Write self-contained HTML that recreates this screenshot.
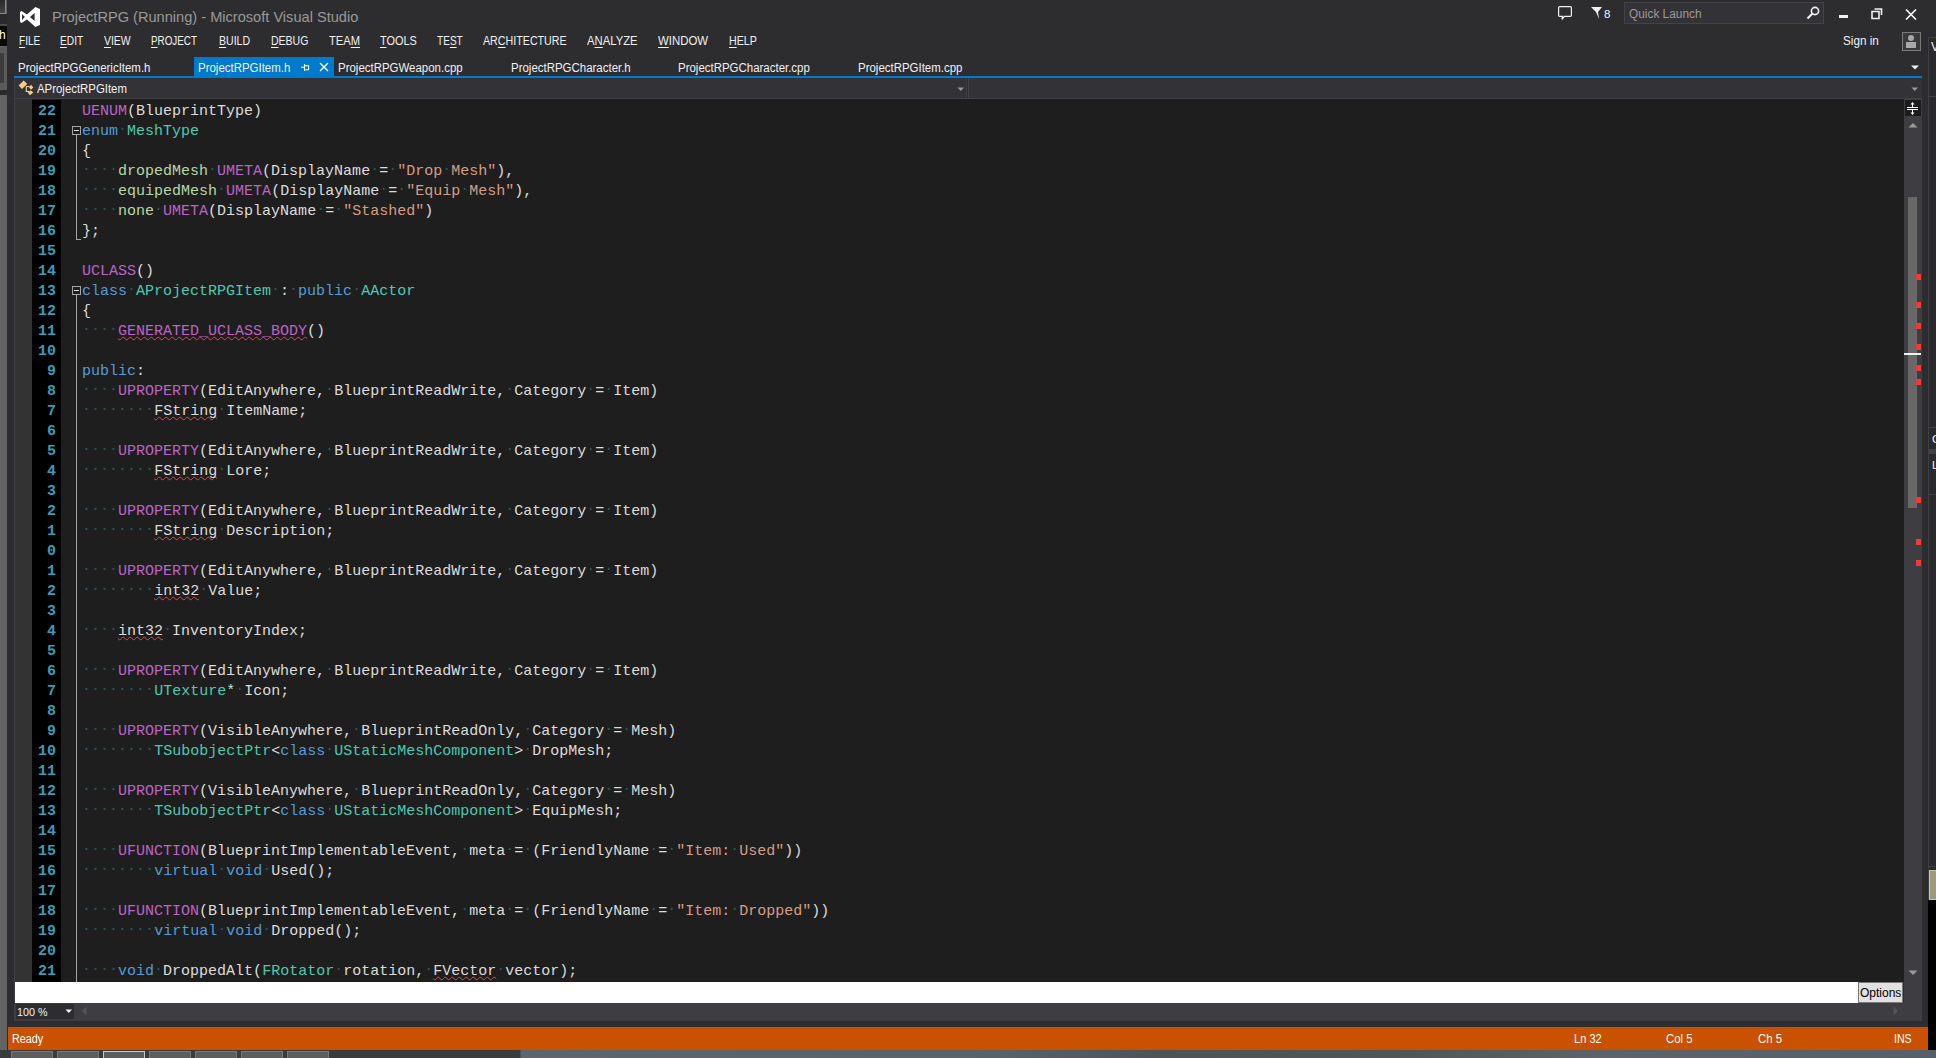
<!DOCTYPE html>
<html><head><meta charset="utf-8">
<style>
*{margin:0;padding:0;box-sizing:border-box}
html,body{width:1936px;height:1058px;overflow:hidden;background:#2d2d30;font-family:"Liberation Sans",sans-serif}
.a{position:absolute}
.ui{font-size:11.5px;color:#f1f1f1;white-space:nowrap;line-height:14px}
/* left strip */
#lstrip{left:0;top:0;width:7px;height:1050px;background:#636363}
/* title */
#title{left:52px;top:8px;font-size:14.6px;color:#999999;line-height:18px;white-space:nowrap}
.menu{top:34px;font-size:12px;transform-origin:0 0}
.menu u{text-decoration:underline;text-underline-offset:2px}
/* tabs */
#tabline{left:14px;top:76px;width:1908px;height:2px;background:#007acc}
#acttab{left:194px;top:57px;width:140px;height:19px;background:#007acc}
.tab{top:61px;font-size:12px;transform:scaleX(0.955);transform-origin:0 0}
/* nav bar */
#nav{left:14px;top:78px;width:1908px;height:21px;background:#333337;border-bottom:1px solid #434346;border-left:1px solid #3f3f46}
#navsep{left:966px;top:78px;width:3px;height:20px;background:#2d2d30;border-left:1px solid #3f3f46;border-right:1px solid #434346}
/* editor */
#editor{left:15px;top:99px;width:1889px;height:883px;background:#1e1e1e;overflow:hidden}
#lmargin{left:15px;top:99px;width:17px;height:883px;background:#333333}
#gutter{left:32px;top:100px;width:29px;height:882px;background:#000}
#nums{left:32px;top:102px;width:24px;font-family:"Liberation Mono",monospace;font-weight:bold;font-size:15px;line-height:20px;color:#3a9cb8;text-align:right}
#code{left:82px;top:102px;font-family:"Liberation Mono",monospace;font-size:15px;line-height:20px;color:#dcdcdc;white-space:pre}
#code .ln{height:20px}
#code i{font-style:normal;color:#245a5e;position:relative;top:-2px}
.m{color:#bd63c5}.k{color:#569cd6}.t{color:#4ec9b0}.e{color:#b8d7a3}.q{color:#d69d85}
.z,.zm{text-decoration:underline wavy #e04848;text-decoration-thickness:1px;text-underline-offset:1px;text-decoration-skip-ink:none}
.zm{color:#bd63c5}
/* vscroll */
#vscroll{left:1904px;top:99px;width:18px;height:922px;background:#3e3e42}
#split{left:1905px;top:100px;width:16px;height:16px;background:#1c1c1c}
#thumb{left:1908px;top:197px;width:9px;height:311px;background:#686868}
.mark{left:1916px;width:5px;height:6px;background:#f03a3a}
/* find */
#find{left:15px;top:982px;width:1843px;height:21px;background:#fff}
#opts{left:1858px;top:982px;width:45px;height:21px;background:#e1e1e1;border:1px solid #7a7a7a;font-size:12px;color:#000;line-height:21px;padding-left:1px}
#hscroll{left:15px;top:1003px;width:1889px;height:18px;background:#3e3e42}
#zoom{left:16px;top:1004px;width:58px;height:15px;background:#2d2d30}
/* status */
#status{left:8px;top:1027px;width:1920px;height:23px;background:#ca5100}
.st{top:1032px;color:#fff;font-size:12px;transform-origin:0 0}
#taskbar{left:0;top:1050px;width:1936px;height:8px;background:linear-gradient(90deg,#393c3f 0,#393c3f 520px,#5c666c 521px,#58626a 1000px,#4c545a 1150px,#4e565c 1400px,#5c646a 1600px,#55606a 1936px)}
#rpanel{left:1928px;top:37px;width:8px;height:1013px;background:#2a2a2d;border-left:1px solid #3f3f46}
</style></head><body>
<div class="a" id="lstrip"></div>
<div class="a" style="left:0;top:0;width:6px;height:14px;background:linear-gradient(#2a2a2a,#454545);border:1px solid #8a8a8a;border-top:none;border-left:none"></div>
<div class="a" style="left:0;top:14px;width:7px;height:11px;background:#2a2a2a"></div>
<div class="a" style="left:0;top:24px;width:7px;height:2px;background:#4a4a4a"></div><div class="a" style="left:0;top:26px;width:7px;height:20px;background:#0a0a0a;color:#fff;font-size:12px;line-height:14px;overflow:hidden"><span style="position:relative;left:-1px;top:2px">h</span></div>
<div class="a" style="left:0;top:47px;width:7px;height:43px;background:#5b5b5b"><div style="position:absolute;left:0;top:6px;width:4px;height:30px;background:#3c3c3c"></div></div>
<div class="a" style="left:0;top:90px;width:7px;height:5px;background:#2a2a2a"></div>

<!-- VS logo -->
<svg class="a" style="left:19px;top:6px" width="22" height="22" viewBox="0 0 22 22">
<path d="M1 6 L2.5 5 L8 8.6 L16.4 1 L21 3 L21 19 L16.4 21 L8 13.4 L2.5 17 L1 16 Z M3 8 L3 14 L5.8 11 Z M15.6 7 L15.6 15 L11 11 Z" fill="#fff" fill-rule="evenodd"/>
</svg>
<div class="a" id="title">ProjectRPG (Running) - Microsoft Visual Studio</div>

<div class="a ui menu" style="transform:scaleX(0.84);left:19px"><u>F</u>ILE</div>
<div class="a ui menu" style="transform:scaleX(0.85);left:60px"><u>E</u>DIT</div>
<div class="a ui menu" style="transform:scaleX(0.87);left:104px"><u>V</u>IEW</div>
<div class="a ui menu" style="transform:scaleX(0.82);left:151px"><u>P</u>ROJECT</div>
<div class="a ui menu" style="transform:scaleX(0.88);left:219px"><u>B</u>UILD</div>
<div class="a ui menu" style="transform:scaleX(0.876);left:271px"><u>D</u>EBUG</div>
<div class="a ui menu" style="transform:scaleX(0.93);left:329px">TEA<u>M</u></div>
<div class="a ui menu" style="transform:scaleX(0.91);left:380px"><u>T</u>OOLS</div>
<div class="a ui menu" style="transform:scaleX(0.84);left:437px">TE<u>S</u>T</div>
<div class="a ui menu" style="transform:scaleX(0.89);left:483px">AR<u>C</u>HITECTURE</div>
<div class="a ui menu" style="transform:scaleX(0.94);left:587px">A<u>N</u>ALYZE</div>
<div class="a ui menu" style="transform:scaleX(0.95);left:658px"><u>W</u>INDOW</div>
<div class="a ui menu" style="transform:scaleX(0.89);left:729px"><u>H</u>ELP</div>

<!-- title right -->
<svg class="a" style="left:1557px;top:5px" width="16" height="16" viewBox="0 0 16 16"><path d="M2.7 1.6 H13.3 Q14.4 1.6 14.4 2.7 V10.3 Q14.4 11.4 13.3 11.4 H7.5 L5 14.4 L5.6 11.4 H2.7 Q1.6 11.4 1.6 10.3 V2.7 Q1.6 1.6 2.7 1.6 Z" fill="none" stroke="#f1f1f1" stroke-width="1.2"/></svg>
<svg class="a" style="left:1590px;top:6px" width="14" height="14" viewBox="0 0 14 14"><path d="M1 1 H12 L8 6 L9 13 L6 6 Z" fill="#f1f1f1"/></svg>
<div class="a ui" style="left:1604px;top:7px">8</div>
<div class="a" style="left:1624px;top:2px;width:200px;height:22px;background:#333337;border:1px solid #434346"></div>
<div class="a ui" style="left:1629px;top:7px;color:#999999;font-size:12px;transform-origin:0 0;transform:scaleX(0.988)">Quick Launch</div>
<svg class="a" style="left:1806px;top:6px" width="14" height="14" viewBox="0 0 14 14"><circle cx="9" cy="5" r="3.6" fill="none" stroke="#f1f1f1" stroke-width="1.6"/><path d="M6.5 7.5 L1.5 12.5" stroke="#f1f1f1" stroke-width="2.2"/></svg>
<div class="a" style="left:1839px;top:15px;width:9px;height:3px;background:#f1f1f1"></div>
<svg class="a" style="left:1871px;top:8px" width="12" height="12" viewBox="0 0 12 12"><path d="M3.5 1 H10.5 V7 M1 3.5 H8 V10.5 H1 Z" fill="none" stroke="#f1f1f1" stroke-width="1.6"/></svg>
<svg class="a" style="left:1905px;top:9px" width="12" height="11" viewBox="0 0 12 11"><path d="M1 0.5 L11 10.5 M11 0.5 L1 10.5" stroke="#f1f1f1" stroke-width="1.7"/></svg>
<div class="a ui" style="left:1843px;top:34px;font-size:12px;transform-origin:0 0;transform:scaleX(0.978)">Sign in</div>
<div class="a" style="left:1902px;top:32px;width:19px;height:19px;border:1px solid #7a7a7a;background:#3a3a3d"><div style="position:absolute;left:5px;top:2px;width:6px;height:6px;border-radius:3px;background:#a8a8a8"></div><div style="position:absolute;left:3px;top:9px;width:10px;height:6px;background:#a8a8a8"></div></div>

<!-- tabs -->
<div class="a" id="acttab"></div>
<div class="a" id="tabline"></div>
<div class="a ui tab" style="left:18px">ProjectRPGGenericItem.h</div>
<div class="a ui tab" style="left:198px">ProjectRPGItem.h</div>
<svg class="a" style="left:300px;top:62px" width="10" height="10" viewBox="0 0 10 10"><path d="M1 5.2 H4.5 M4.5 2 V9 M4.5 3.7 H8.6 V7.8 H4.5" fill="none" stroke="#fff" stroke-width="1.1"/></svg>
<svg class="a" style="left:319px;top:62px" width="10" height="10" viewBox="0 0 10 10"><path d="M1 1 L9 9 M9 1 L1 9" stroke="#fff" stroke-width="1.4"/></svg>
<div class="a ui tab" style="left:338px">ProjectRPGWeapon.cpp</div>
<div class="a ui tab" style="left:511px">ProjectRPGCharacter.h</div>
<div class="a ui tab" style="left:678px">ProjectRPGCharacter.cpp</div>
<div class="a ui tab" style="left:858px">ProjectRPGItem.cpp</div>
<svg class="a" style="left:1910px;top:65px" width="10" height="6" viewBox="0 0 10 6"><path d="M1 0.5 H9 L5 4.5 Z" fill="#f1f1f1"/></svg>

<!-- right panel sliver -->
<div class="a" id="rpanel"></div>
<div class="a" style="left:1928px;top:37px;width:8px;height:1px;background:#3f3f46"></div>
<div class="a ui" style="left:1931px;top:40px;font-size:12px;color:#f1f1f1">V</div>
<div class="a" style="left:1929px;top:96px;width:7px;height:1px;background:#3f3f46"></div>
<div class="a" style="left:1929px;top:427px;width:7px;height:1px;background:#3f3f46"></div>
<div class="a ui" style="left:1932px;top:432px;font-size:11.5px;color:#f1f1f1">C</div>
<div class="a" style="left:1928px;top:449px;width:8px;height:5px;background:#3f3f46"></div>
<div class="a ui" style="left:1932px;top:458px;font-size:11.5px;color:#f1f1f1">L</div>
<div class="a" style="left:1929px;top:494px;width:7px;height:1px;background:#3f3f46"></div>
<div class="a" style="left:1929px;top:866px;width:7px;height:1px;background:#3f3f46"></div>
<div class="a" style="left:1929px;top:870px;width:7px;height:30px;background:#9c9a7c;border:1px solid #c8c6a8;border-right:none"></div>
<div class="a" style="left:1928px;top:900px;width:8px;height:150px;background:#000"></div>

<!-- nav -->
<div class="a" id="nav"></div>
<div class="a" id="navsep"></div>
<svg class="a" style="left:18px;top:80px" width="16" height="16" viewBox="0 0 16 16"><path d="M0.6 5.5 L5.7 0.6 L9.2 4 L4 8.9 Z M11 7.5 L13 4.8 L15.3 7.5 L13 9.8 Z M9.7 12.6 L12.8 10.2 L15.3 12.5 L12 15.2 Z" fill="#f2cc8c"/><path d="M8.3 6.5 V11.5 H11 M8.3 6.5 H11.5" fill="none" stroke="#f5d8a5" stroke-width="1.1"/></svg>
<div class="a ui" style="left:37px;top:82px;font-size:12px;transform-origin:0 0;transform:scaleX(0.95)">AProjectRPGItem</div>
<svg class="a" style="left:957px;top:87px" width="8" height="5" viewBox="0 0 8 5"><path d="M0.5 0.5 H7 L3.75 4 Z" fill="#999"/></svg>
<svg class="a" style="left:1911px;top:87px" width="8" height="5" viewBox="0 0 8 5"><path d="M0.5 0.5 H7 L3.75 4 Z" fill="#999"/></svg>

<!-- editor -->
<div class="a" id="editor"></div>
<div class="a" id="lmargin"></div>
<div class="a" style="left:14px;top:78px;width:1px;height:943px;background:#3f3f46"></div>
<div class="a" id="gutter"></div>
<div class="a" id="nums">
<div>22</div>
<div>21</div>
<div>20</div>
<div>19</div>
<div>18</div>
<div>17</div>
<div>16</div>
<div>15</div>
<div>14</div>
<div>13</div>
<div>12</div>
<div>11</div>
<div>10</div>
<div>9</div>
<div>8</div>
<div>7</div>
<div>6</div>
<div>5</div>
<div>4</div>
<div>3</div>
<div>2</div>
<div>1</div>
<div>0</div>
<div>1</div>
<div>2</div>
<div>3</div>
<div>4</div>
<div>5</div>
<div>6</div>
<div>7</div>
<div>8</div>
<div>9</div>
<div>10</div>
<div>11</div>
<div>12</div>
<div>13</div>
<div>14</div>
<div>15</div>
<div>16</div>
<div>17</div>
<div>18</div>
<div>19</div>
<div>20</div>
<div>21</div>
</div>
<!-- fold guides -->
<div class="a" style="left:72px;top:126px;width:9px;height:9px;border:1px solid #a5a5a5"><div style="position:absolute;left:1px;top:3px;width:5px;height:1px;background:#e0e0e0"></div></div>
<div class="a" style="left:76px;top:135px;width:1px;height:105px;background:#a5a5a5"></div>
<div class="a" style="left:76px;top:239px;width:5px;height:1px;background:#a5a5a5"></div>
<div class="a" style="left:72px;top:286px;width:9px;height:9px;border:1px solid #a5a5a5"><div style="position:absolute;left:1px;top:3px;width:5px;height:1px;background:#e0e0e0"></div></div>
<div class="a" style="left:76px;top:295px;width:1px;height:687px;background:#a5a5a5"></div>
<div class="a" id="code"><div class="ln"><span class="m">UENUM</span>(BlueprintType)</div><div class="ln"><span class="k">enum</span><i>·</i><span class="t">MeshType</span></div><div class="ln">{</div><div class="ln"><i>·</i><i>·</i><i>·</i><i>·</i><span class="e">dropedMesh</span><i>·</i><span class="m">UMETA</span>(DisplayName<i>·</i>=<i>·</i><span class="q">&quot;Drop<i>·</i>Mesh&quot;</span>),</div><div class="ln"><i>·</i><i>·</i><i>·</i><i>·</i><span class="e">equipedMesh</span><i>·</i><span class="m">UMETA</span>(DisplayName<i>·</i>=<i>·</i><span class="q">&quot;Equip<i>·</i>Mesh&quot;</span>),</div><div class="ln"><i>·</i><i>·</i><i>·</i><i>·</i><span class="e">none</span><i>·</i><span class="m">UMETA</span>(DisplayName<i>·</i>=<i>·</i><span class="q">&quot;Stashed&quot;</span>)</div><div class="ln">};</div><div class="ln"></div><div class="ln"><span class="m">UCLASS</span>()</div><div class="ln"><span class="k">class</span><i>·</i><span class="t">AProjectRPGItem</span><i>·</i>:<i>·</i><span class="k">public</span><i>·</i><span class="t">AActor</span></div><div class="ln">{</div><div class="ln"><i>·</i><i>·</i><i>·</i><i>·</i><span class="zm">GENERATED_UCLASS_BODY</span>()</div><div class="ln"></div><div class="ln"><span class="k">public</span>:</div><div class="ln"><i>·</i><i>·</i><i>·</i><i>·</i><span class="m">UPROPERTY</span>(EditAnywhere,<i>·</i>BlueprintReadWrite,<i>·</i>Category<i>·</i>=<i>·</i>Item)</div><div class="ln"><i>·</i><i>·</i><i>·</i><i>·</i><i>·</i><i>·</i><i>·</i><i>·</i><span class="z">FString</span><i>·</i>ItemName;</div><div class="ln"></div><div class="ln"><i>·</i><i>·</i><i>·</i><i>·</i><span class="m">UPROPERTY</span>(EditAnywhere,<i>·</i>BlueprintReadWrite,<i>·</i>Category<i>·</i>=<i>·</i>Item)</div><div class="ln"><i>·</i><i>·</i><i>·</i><i>·</i><i>·</i><i>·</i><i>·</i><i>·</i><span class="z">FString</span><i>·</i>Lore;</div><div class="ln"></div><div class="ln"><i>·</i><i>·</i><i>·</i><i>·</i><span class="m">UPROPERTY</span>(EditAnywhere,<i>·</i>BlueprintReadWrite,<i>·</i>Category<i>·</i>=<i>·</i>Item)</div><div class="ln"><i>·</i><i>·</i><i>·</i><i>·</i><i>·</i><i>·</i><i>·</i><i>·</i><span class="z">FString</span><i>·</i>Description;</div><div class="ln"></div><div class="ln"><i>·</i><i>·</i><i>·</i><i>·</i><span class="m">UPROPERTY</span>(EditAnywhere,<i>·</i>BlueprintReadWrite,<i>·</i>Category<i>·</i>=<i>·</i>Item)</div><div class="ln"><i>·</i><i>·</i><i>·</i><i>·</i><i>·</i><i>·</i><i>·</i><i>·</i><span class="z">int32</span><i>·</i>Value;</div><div class="ln"></div><div class="ln"><i>·</i><i>·</i><i>·</i><i>·</i><span class="z">int32</span><i>·</i>InventoryIndex;</div><div class="ln"></div><div class="ln"><i>·</i><i>·</i><i>·</i><i>·</i><span class="m">UPROPERTY</span>(EditAnywhere,<i>·</i>BlueprintReadWrite,<i>·</i>Category<i>·</i>=<i>·</i>Item)</div><div class="ln"><i>·</i><i>·</i><i>·</i><i>·</i><i>·</i><i>·</i><i>·</i><i>·</i><span class="t">UTexture</span>*<i>·</i>Icon;</div><div class="ln"></div><div class="ln"><i>·</i><i>·</i><i>·</i><i>·</i><span class="m">UPROPERTY</span>(VisibleAnywhere,<i>·</i>BlueprintReadOnly,<i>·</i>Category<i>·</i>=<i>·</i>Mesh)</div><div class="ln"><i>·</i><i>·</i><i>·</i><i>·</i><i>·</i><i>·</i><i>·</i><i>·</i><span class="t">TSubobjectPtr</span>&lt;<span class="k">class</span><i>·</i><span class="t">UStaticMeshComponent</span>&gt;<i>·</i>DropMesh;</div><div class="ln"></div><div class="ln"><i>·</i><i>·</i><i>·</i><i>·</i><span class="m">UPROPERTY</span>(VisibleAnywhere,<i>·</i>BlueprintReadOnly,<i>·</i>Category<i>·</i>=<i>·</i>Mesh)</div><div class="ln"><i>·</i><i>·</i><i>·</i><i>·</i><i>·</i><i>·</i><i>·</i><i>·</i><span class="t">TSubobjectPtr</span>&lt;<span class="k">class</span><i>·</i><span class="t">UStaticMeshComponent</span>&gt;<i>·</i>EquipMesh;</div><div class="ln"></div><div class="ln"><i>·</i><i>·</i><i>·</i><i>·</i><span class="m">UFUNCTION</span>(BlueprintImplementableEvent,<i>·</i>meta<i>·</i>=<i>·</i>(FriendlyName<i>·</i>=<i>·</i><span class="q">&quot;Item:<i>·</i>Used&quot;</span>))</div><div class="ln"><i>·</i><i>·</i><i>·</i><i>·</i><i>·</i><i>·</i><i>·</i><i>·</i><span class="k">virtual</span><i>·</i><span class="k">void</span><i>·</i>Used();</div><div class="ln"></div><div class="ln"><i>·</i><i>·</i><i>·</i><i>·</i><span class="m">UFUNCTION</span>(BlueprintImplementableEvent,<i>·</i>meta<i>·</i>=<i>·</i>(FriendlyName<i>·</i>=<i>·</i><span class="q">&quot;Item:<i>·</i>Dropped&quot;</span>))</div><div class="ln"><i>·</i><i>·</i><i>·</i><i>·</i><i>·</i><i>·</i><i>·</i><i>·</i><span class="k">virtual</span><i>·</i><span class="k">void</span><i>·</i>Dropped();</div><div class="ln"></div><div class="ln"><i>·</i><i>·</i><i>·</i><i>·</i><span class="k">void</span><i>·</i>DroppedAlt(<span class="t">FRotator</span><i>·</i>rotation,<i>·</i><span class="z">FVector</span><i>·</i>vector);</div></div>

<!-- vscroll -->
<div class="a" id="vscroll"></div>
<div class="a" id="split"></div>
<svg class="a" style="left:1905px;top:100px" width="16" height="16" viewBox="0 0 16 16"><path d="M2 7.5 H13 M2 9.5 H13 M7.5 3 V7 M7.5 10 V14" stroke="#fff" stroke-width="1"/><path d="M5.5 4.5 L7.5 2 L9.5 4.5 Z M5.5 12.5 L7.5 15 L9.5 12.5 Z" fill="#fff"/></svg>
<svg class="a" style="left:1908px;top:122px" width="10" height="6" viewBox="0 0 10 6"><path d="M0.5 5.5 L5 1 L9.5 5.5 Z" fill="#999"/></svg>
<div class="a" id="thumb"></div>
<div class="a mark" style="top:274px"></div>
<div class="a mark" style="top:302px"></div>
<div class="a mark" style="top:323px"></div>
<div class="a mark" style="top:344px"></div>
<div class="a mark" style="top:365px"></div>
<div class="a mark" style="top:379px"></div>
<div class="a mark" style="top:497px"></div>
<div class="a mark" style="top:539px"></div>
<div class="a mark" style="top:560px"></div>
<div class="a" style="left:1904px;top:353px;width:17px;height:2px;background:#f1f1f1"></div>
<svg class="a" style="left:1908px;top:970px" width="10" height="6" viewBox="0 0 10 6"><path d="M0.5 0.5 L5 5 L9.5 0.5 Z" fill="#999"/></svg>

<!-- find / hscroll -->
<div class="a" id="hscroll"></div>
<div class="a" id="find"></div>
<div class="a" id="opts"><span style="display:inline-block;transform-origin:0 0;transform:scaleX(1.0)">Options</span></div>
<div class="a" id="zoom"></div>
<div class="a ui" style="left:17px;top:1005px;font-size:11.5px;transform-origin:0 0;transform:scaleX(0.936)">100 %</div>
<svg class="a" style="left:65px;top:1009px" width="8" height="5" viewBox="0 0 8 5"><path d="M0.5 0.5 H7 L3.75 4 Z" fill="#f1f1f1"/></svg>
<svg class="a" style="left:81px;top:1006px" width="6" height="10" viewBox="0 0 6 10"><path d="M5.5 0.5 V9.5 L1 5 Z" fill="#555558"/></svg>
<svg class="a" style="left:1893px;top:1006px" width="6" height="10" viewBox="0 0 6 10"><path d="M0.5 0.5 V9.5 L5 5 Z" fill="#555558"/></svg>

<!-- status -->
<div class="a" id="status"></div>
<div class="a ui st" style="left:12px;transform:scaleX(0.9)">Ready</div>
<div class="a ui st" style="left:1574px;transform:scaleX(0.923)">Ln 32</div>
<div class="a ui st" style="left:1666px;transform:scaleX(0.946)">Col 5</div>
<div class="a ui st" style="left:1758px;transform:scaleX(0.948)">Ch 5</div>
<div class="a ui st" style="left:1894px;transform:scaleX(0.88)">INS</div>
<div class="a" id="taskbar"></div>
<div class="a" style="left:11px;top:1051px;width:42px;height:8px;background:#5c5e60;border:1px solid #7a7a7a;border-bottom:none"></div>
<div class="a" style="left:57px;top:1051px;width:42px;height:8px;background:#5c5e60;border:1px solid #7a7a7a;border-bottom:none"></div>
<div class="a" style="left:103px;top:1051px;width:42px;height:8px;background:#5c5e60;border:1px solid #c8c8c8;border-bottom:none"></div>
<div class="a" style="left:149px;top:1051px;width:42px;height:8px;background:#5c5e60;border:1px solid #7a7a7a;border-bottom:none"></div>
<div class="a" style="left:195px;top:1051px;width:42px;height:8px;background:#5c5e60;border:1px solid #7a7a7a;border-bottom:none"></div>
<div class="a" style="left:241px;top:1051px;width:42px;height:8px;background:#5c5e60;border:1px solid #7a7a7a;border-bottom:none"></div>
<div class="a" style="left:287px;top:1051px;width:42px;height:8px;background:#5c5e60;border:1px solid #7a7a7a;border-bottom:none"></div>

</body></html>
